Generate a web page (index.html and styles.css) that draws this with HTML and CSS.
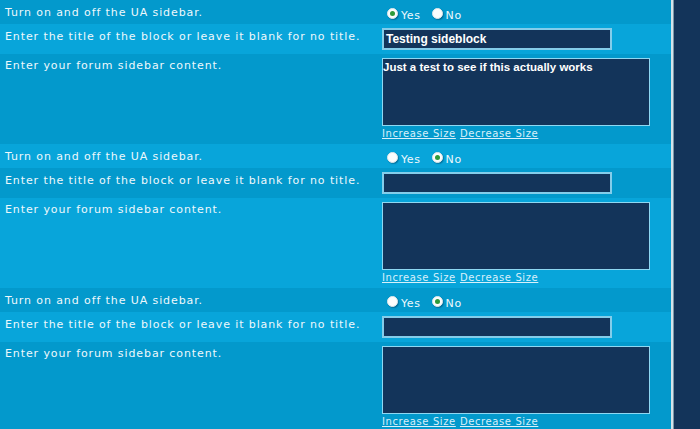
FILE: index.html
```html
<!DOCTYPE html>
<html lang="en">
<head>
    <meta charset="UTF-8">
    <title>Sidebar settings</title>
    <link rel="stylesheet" href="styles.css">
</head>
<body>
    <div id="page">
        <div id="main">
            <!-- block 1 -->
            <div class="row dark short">
                <div class="label">Turn on and off the UA sidebar.</div>
                <div class="field radios">
                    <span class="radio on"></span><span class="opt">Yes</span>
                    <span class="radio"></span><span class="opt">No</span>
                </div>
            </div>
            <div class="row light mid">
                <div class="label">Enter the title of the block or leave it blank for no title.</div>
                <div class="field"><div class="input">Testing sideblock</div></div>
            </div>
            <div class="row dark tall">
                <div class="label">Enter your forum sidebar content.</div>
                <div class="field">
                    <div class="area">Just a test to see if this actually works</div>
                    <div class="links"><a href="#">Increase Size</a> <a href="#">Decrease Size</a></div>
                </div>
            </div>

            <!-- block 2 -->
            <div class="row light short">
                <div class="label">Turn on and off the UA sidebar.</div>
                <div class="field radios">
                    <span class="radio"></span><span class="opt">Yes</span>
                    <span class="radio on"></span><span class="opt">No</span>
                </div>
            </div>
            <div class="row dark mid">
                <div class="label">Enter the title of the block or leave it blank for no title.</div>
                <div class="field"><div class="input"></div></div>
            </div>
            <div class="row light tall">
                <div class="label">Enter your forum sidebar content.</div>
                <div class="field">
                    <div class="area"></div>
                    <div class="links"><a href="#">Increase Size</a> <a href="#">Decrease Size</a></div>
                </div>
            </div>

            <!-- block 3 -->
            <div class="row dark short">
                <div class="label">Turn on and off the UA sidebar.</div>
                <div class="field radios">
                    <span class="radio"></span><span class="opt">Yes</span>
                    <span class="radio on"></span><span class="opt">No</span>
                </div>
            </div>
            <div class="row light mid">
                <div class="label">Enter the title of the block or leave it blank for no title.</div>
                <div class="field"><div class="input"></div></div>
            </div>
            <div class="row dark tall">
                <div class="label">Enter your forum sidebar content.</div>
                <div class="field">
                    <div class="area"></div>
                    <div class="links"><a href="#">Increase Size</a> <a href="#">Decrease Size</a></div>
                </div>
            </div>
        </div>
        <div id="edge"></div>
    </div>
</body>
</html>
```

FILE: styles.css
```css
* {
    margin: 0;
    padding: 0;
    box-sizing: border-box;
}

body {
    background: #13345a;
    font-family: "DejaVu Sans", Verdana, sans-serif;
    font-size: 11px;
    color: #eef8fc;
    overflow: hidden;
}

#page {
    display: flex;
    width: 700px;
    height: 429px;
    overflow: hidden;
}

#main {
    width: 671px;
    flex: none;
}

#edge {
    width: 29px;
    border-left: 2px solid #d4e3ea;
    box-shadow: inset 1px 0 0 #7d97a8;
    background: #13345a;
}

.row {
    display: grid;
    grid-template-columns: 382px 1fr;
}

.dark {
    background: #0399cc;
}

.light {
    background: #08a5da;
}

.short {
    height: 24px;
}

.mid {
    height: 30px;
}

.tall {
    height: 90px;
}

.label {
    padding: 5px 0 0 5px;
    white-space: nowrap;
    letter-spacing: 0.9px;
}

.short .label {
    padding-top: 6px;
}

.mid .label {
    padding-top: 6px;
}

.field {
    padding-top: 4px;
}

.radios {
    display: flex;
    align-items: center;
    padding: 3px 0 0 5px;
    height: 24px;
}

.radio {
    width: 11px;
    height: 11px;
    border-radius: 50%;
    background: #fbfdfd;
    border: 1px solid #dfe7ea;
    display: flex;
    align-items: center;
    justify-content: center;
    box-shadow: 1px 1px 1px rgba(0, 40, 70, 0.35);
}

.radio.on::after {
    content: "";
    width: 5px;
    height: 5px;
    border-radius: 50%;
    background: #2e9a3a;
}

.opt {
    margin: 0 11px 0 3px;
    padding-top: 3px;
    letter-spacing: 0.6px;
}

.input {
    width: 230px;
    height: 22px;
    background: #13345a;
    border: 2px solid #84cdea;
    color: #ffffff;
    font-family: "Liberation Sans", Arial, sans-serif;
    font-size: 12px;
    font-weight: bold;
    padding: 2px 0 0 2px;
    line-height: 15px;
}

.area {
    width: 268px;
    height: 68px;
    background: #13345a;
    border: 1px solid #8fd8f2;
    color: #ffffff;
    font-family: "Liberation Sans", Arial, sans-serif;
    font-size: 11.5px;
    font-weight: bold;
    padding: 1px 0 0 0;
    line-height: 14px;
}

.links {
    padding-top: 1px;
    line-height: 14px;
    letter-spacing: 0.6px;
}

.links a {
    color: #d8f0fa;
    font-size: 10px;
}
```
